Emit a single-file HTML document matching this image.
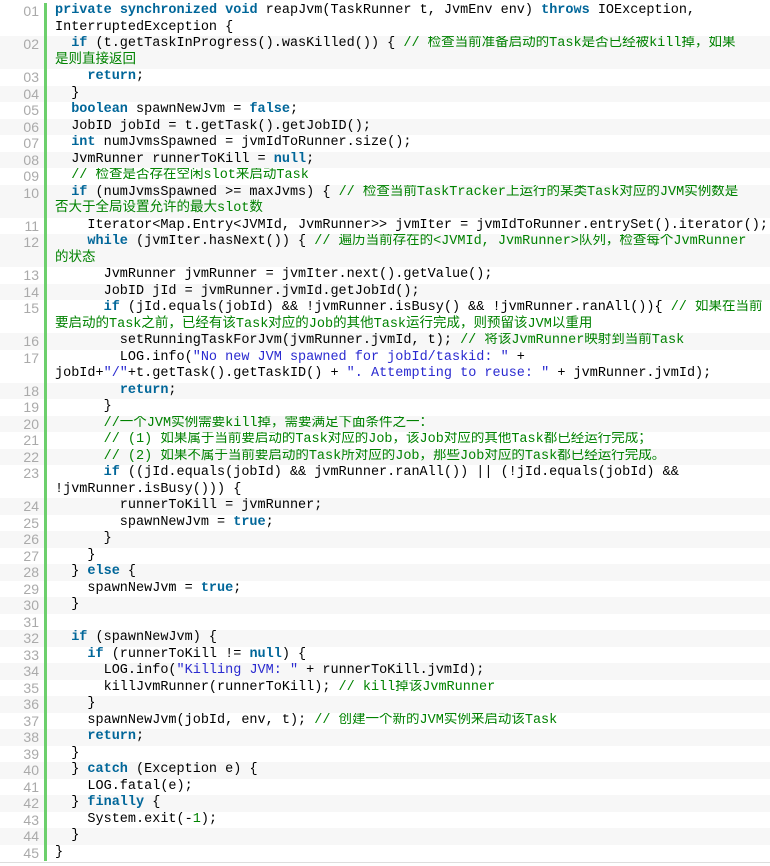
<!DOCTYPE html>
<html><head><meta charset="utf-8"><style>
html,body{margin:0;padding:0;background:#fff;width:770px;height:866px;overflow:hidden}
.w{position:absolute;top:3px;left:0;width:770px}
.l{display:flex;height:16.5px;overflow:hidden}
.l.t{height:33px}
.l.e{background:#f7f7f7}
.n{width:44px;flex:none;box-sizing:border-box;padding-right:5px;text-align:right;color:#aaa;font:14px "Liberation Sans",sans-serif;line-height:16.5px}
.c{flex:1;border-left:3px solid #6ccf6c;padding-left:8px;white-space:pre;font:13.5px "Liberation Mono","Noto Sans CJK SC",monospace;line-height:16.5px;color:#000;position:relative}
.c span{line-height:16px;vertical-align:top}
.k{color:#006699;font-weight:bold}
.m{color:#008200}
.s{color:#2a2ad0}
.bot{position:absolute;left:0;top:862px;width:770px;height:1px;background:#ddd}
</style></head><body><div class="w">
<div class="l t"><div class="n">01</div><div class="c"><span class="k">private</span> <span class="k">synchronized</span> <span class="k">void</span> reapJvm(TaskRunner t, JvmEnv env) <span class="k">throws</span> IOException,
InterruptedException {</div></div>
<div class="l t e"><div class="n">02</div><div class="c">  <span class="k">if</span> (t.getTaskInProgress().wasKilled()) { <span class="m">// 检查当前准备启动的Task是否已经被kill掉，如果
是则直接返回</span></div></div>
<div class="l"><div class="n">03</div><div class="c">    <span class="k">return</span>;</div></div>
<div class="l e"><div class="n">04</div><div class="c">  }</div></div>
<div class="l"><div class="n">05</div><div class="c">  <span class="k">boolean</span> spawnNewJvm = <span class="k">false</span>;</div></div>
<div class="l e"><div class="n">06</div><div class="c">  JobID jobId = t.getTask().getJobID();</div></div>
<div class="l"><div class="n">07</div><div class="c">  <span class="k">int</span> numJvmsSpawned = jvmIdToRunner.size();</div></div>
<div class="l e"><div class="n">08</div><div class="c">  JvmRunner runnerToKill = <span class="k">null</span>;</div></div>
<div class="l"><div class="n">09</div><div class="c">  <span class="m">// 检查是否存在空闲slot来启动Task</span></div></div>
<div class="l t e"><div class="n">10</div><div class="c">  <span class="k">if</span> (numJvmsSpawned &gt;= maxJvms) { <span class="m">// 检查当前TaskTracker上运行的某类Task对应的JVM实例数是
否大于全局设置允许的最大slot数</span></div></div>
<div class="l"><div class="n">11</div><div class="c">    Iterator&lt;Map.Entry&lt;JVMId, JvmRunner&gt;&gt; jvmIter = jvmIdToRunner.entrySet().iterator();</div></div>
<div class="l t e"><div class="n">12</div><div class="c">    <span class="k">while</span> (jvmIter.hasNext()) { <span class="m">// 遍历当前存在的&lt;JVMId, JvmRunner&gt;队列，检查每个JvmRunner
的状态</span></div></div>
<div class="l"><div class="n">13</div><div class="c">      JvmRunner jvmRunner = jvmIter.next().getValue();</div></div>
<div class="l e"><div class="n">14</div><div class="c">      JobID jId = jvmRunner.jvmId.getJobId();</div></div>
<div class="l t"><div class="n">15</div><div class="c">      <span class="k">if</span> (jId.equals(jobId) &amp;&amp; !jvmRunner.isBusy() &amp;&amp; !jvmRunner.ranAll()){ <span class="m">// 如果在当前
要启动的Task之前，已经有该Task对应的Job的其他Task运行完成，则预留该JVM以重用</span></div></div>
<div class="l e"><div class="n">16</div><div class="c">        setRunningTaskForJvm(jvmRunner.jvmId, t); <span class="m">// 将该JvmRunner映射到当前Task</span></div></div>
<div class="l t"><div class="n">17</div><div class="c">        LOG.info(<span class="s">"No new JVM spawned for jobId/taskid: "</span> +
jobId+<span class="s">"/"</span>+t.getTask().getTaskID() + <span class="s">". Attempting to reuse: "</span> + jvmRunner.jvmId);</div></div>
<div class="l e"><div class="n">18</div><div class="c">        <span class="k">return</span>;</div></div>
<div class="l"><div class="n">19</div><div class="c">      }</div></div>
<div class="l e"><div class="n">20</div><div class="c">      <span class="m">//一个JVM实例需要kill掉，需要满足下面条件之一：</span></div></div>
<div class="l"><div class="n">21</div><div class="c">      <span class="m">// (1) 如果属于当前要启动的Task对应的Job，该Job对应的其他Task都已经运行完成；</span></div></div>
<div class="l e"><div class="n">22</div><div class="c">      <span class="m">// (2) 如果不属于当前要启动的Task所对应的Job，那些Job对应的Task都已经运行完成。</span></div></div>
<div class="l t"><div class="n">23</div><div class="c">      <span class="k">if</span> ((jId.equals(jobId) &amp;&amp; jvmRunner.ranAll()) || (!jId.equals(jobId) &amp;&amp;
!jvmRunner.isBusy())) {</div></div>
<div class="l e"><div class="n">24</div><div class="c">        runnerToKill = jvmRunner;</div></div>
<div class="l"><div class="n">25</div><div class="c">        spawnNewJvm = <span class="k">true</span>;</div></div>
<div class="l e"><div class="n">26</div><div class="c">      }</div></div>
<div class="l"><div class="n">27</div><div class="c">    }</div></div>
<div class="l e"><div class="n">28</div><div class="c">  } <span class="k">else</span> {</div></div>
<div class="l"><div class="n">29</div><div class="c">    spawnNewJvm = <span class="k">true</span>;</div></div>
<div class="l e"><div class="n">30</div><div class="c">  }</div></div>
<div class="l"><div class="n">31</div><div class="c"> </div></div>
<div class="l e"><div class="n">32</div><div class="c">  <span class="k">if</span> (spawnNewJvm) {</div></div>
<div class="l"><div class="n">33</div><div class="c">    <span class="k">if</span> (runnerToKill != <span class="k">null</span>) {</div></div>
<div class="l e"><div class="n">34</div><div class="c">      LOG.info(<span class="s">"Killing JVM: "</span> + runnerToKill.jvmId);</div></div>
<div class="l"><div class="n">35</div><div class="c">      killJvmRunner(runnerToKill); <span class="m">// kill掉该JvmRunner</span></div></div>
<div class="l e"><div class="n">36</div><div class="c">    }</div></div>
<div class="l"><div class="n">37</div><div class="c">    spawnNewJvm(jobId, env, t); <span class="m">// 创建一个新的JVM实例来启动该Task</span></div></div>
<div class="l e"><div class="n">38</div><div class="c">    <span class="k">return</span>;</div></div>
<div class="l"><div class="n">39</div><div class="c">  }</div></div>
<div class="l e"><div class="n">40</div><div class="c">  } <span class="k">catch</span> (Exception e) {</div></div>
<div class="l"><div class="n">41</div><div class="c">    LOG.fatal(e);</div></div>
<div class="l e"><div class="n">42</div><div class="c">  } <span class="k">finally</span> {</div></div>
<div class="l"><div class="n">43</div><div class="c">    System.exit(-<span class="m">1</span>);</div></div>
<div class="l e"><div class="n">44</div><div class="c">  }</div></div>
<div class="l"><div class="n">45</div><div class="c">}</div></div>
</div><div class="bot"></div></body></html>
